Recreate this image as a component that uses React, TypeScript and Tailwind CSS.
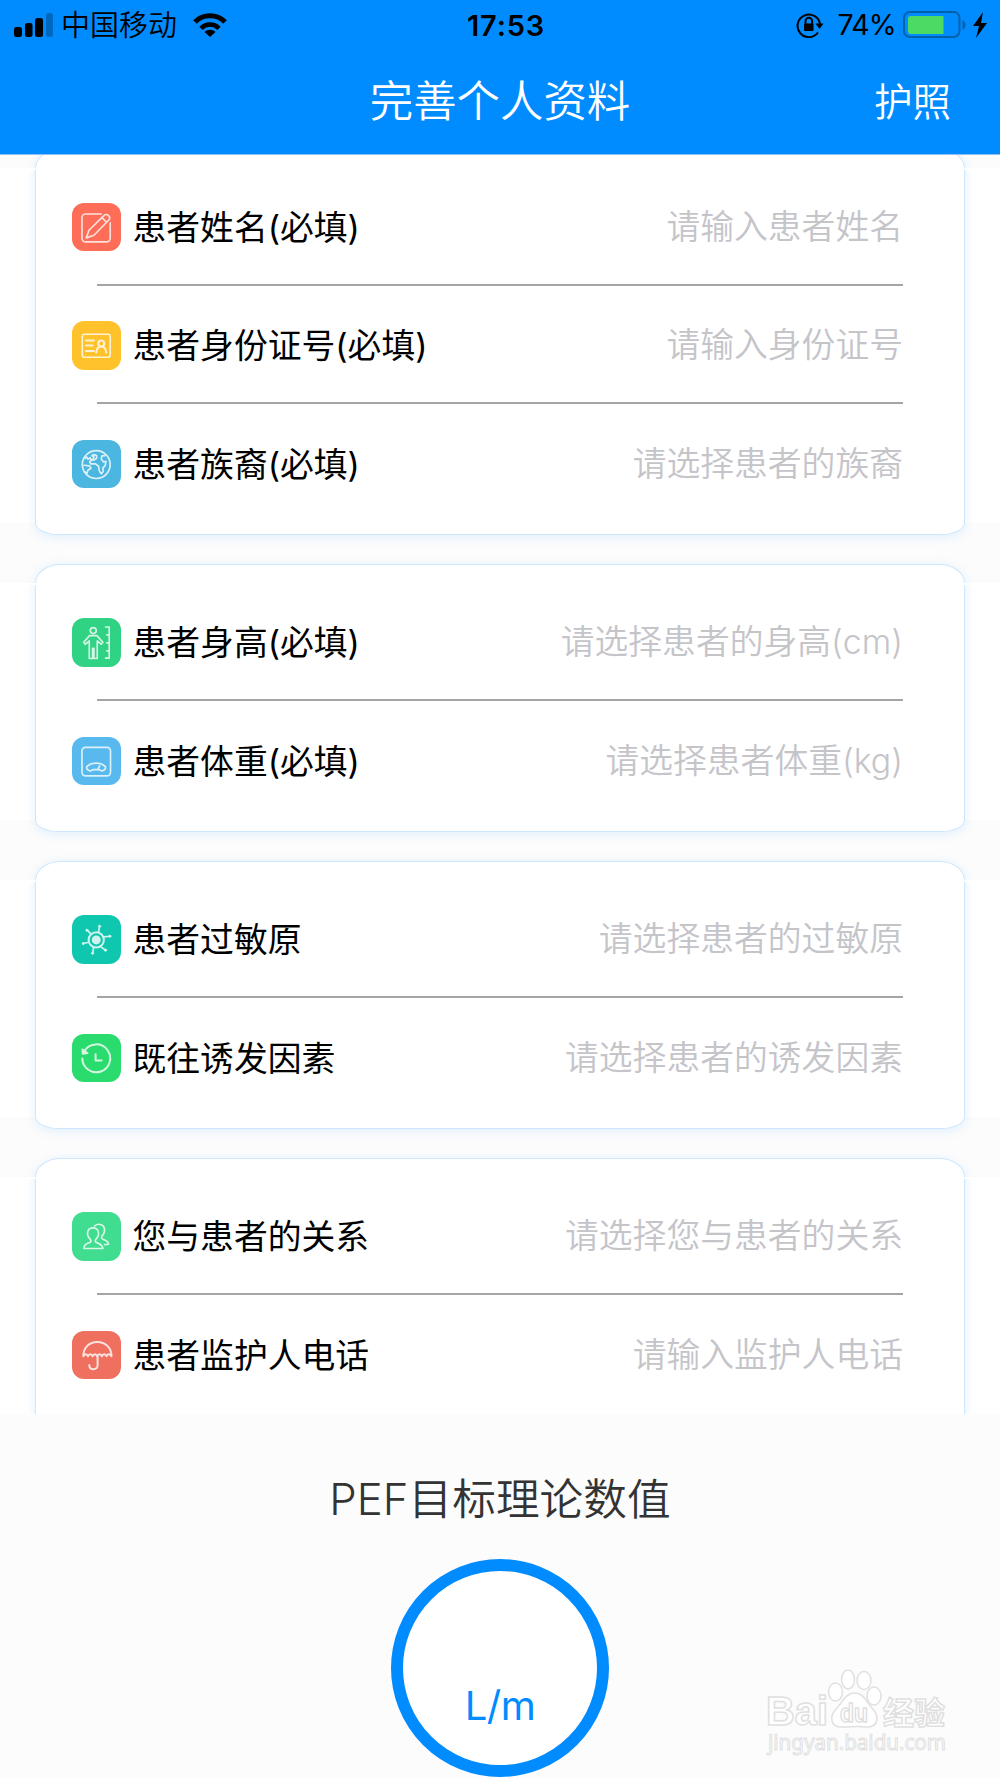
import type { ReactNode } from "react";

type Row = {
  label: string;
  placeholder: string;
  color: string;
  icon: ReactNode;
};

const EditIcon = (
  <>
    <path d="M88 33H41a11 11 0 0 0-11 11v62a11 11 0 0 0 11 11h63a11 11 0 0 0 11-11V60" />
    <path d="M43 105l8-23 45-44a9 9 0 0 1 14 14L66 97zM90 44l14 14" />
  </>
);

const IdIcon = (
  <>
    <rect x="31" y="40" width="84" height="69" rx="7" />
    <path d="M42 59h24M42 74h20M42 90h24" strokeWidth="6" />
    <circle cx="88" cy="68" r="9" strokeWidth="6" />
    <path d="M73 95c1-11 7-18 15-18s14 7 15 18" strokeWidth="6" />
  </>
);

const GlobeIcon = (
  <>
    <circle cx="73" cy="74" r="42" />
    <path d="M39 55l5-4 4 7 7-5 2 8 6-3 3-7-6-4 6-3 8 3v8l-7 5-8 1-6 5 4 6h14l9 7 2 13 6 10 6-7-1-11 7-7 2-13-7 2-7-9 2-9 9-1" />
    <path d="M36 76l17 2 4 7-9 6-3 9-7-5" />
  </>
);

const HeightIcon = (
  <>
    <circle cx="64" cy="38" r="9" />
    <path d="M53 53h22l18 20-5 6-12-10v53H66V91h-4v31H52V69L40 79l-5-6z" />
    <path d="M101 27h11v94h-11M105 51h7M105 75h7M105 99h7" />
  </>
);

const ScaleIcon = (
  <>
    <rect x="30" y="31" width="86" height="86" rx="11" />
    <path d="M44 90c14-15 43-15 57 0 1 5-4 10-10 12-4 1-6-4-12-4h-14c-6 0-6 6-11 4-6-2-11-7-10-12zM78 98l5-11" />
  </>
);

const AllergenIcon = (
  <>
    <circle cx="73" cy="75" r="23" strokeWidth="6" />
    <circle cx="73" cy="75" r="11" fill="white" />
    <path d="M80 51l3-18M95 66l20-2M87 96l14 10M65 98l-3 18M50 82l-16 4M56 56L45 45" />
    <g fill="white" strokeWidth="2">
      <circle cx="83" cy="34" r="3.500" />
      <circle cx="114" cy="64" r="3.500" />
      <circle cx="101" cy="106" r="3.500" />
      <circle cx="62" cy="115" r="3.500" />
      <circle cx="34" cy="86" r="3.500" />
      <circle cx="45" cy="46" r="3.500" />
    </g>
  </>
);

const HistoryIcon = (
  <>
    <path d="M31 74a42 42 0 1 0 7-24" strokeWidth="6" />
    <path d="M31 46l1 14 15-2z" fill="white" />
    <path d="M71 61v19h18" strokeWidth="6" />
  </>
);

const PeopleIcon = (
  <>
    <path d="M36 110c-1-12 8-14 19-19 3-2 2-6 0-9-14-14-9-34 8-34s23 20 9 34c-2 3-3 7 0 9 11 5 20 7 21 19z" />
    <path d="M68 42c12-10 31-4 30 14 0 8-3 12-8 17-2 4-1 7 3 9 9 4 17 6 17 15l-12 1" />
  </>
);

const UmbrellaIcon = (
  <>
    <path d="M34 76c0-26 18-43 42-43s43 17 43 43c-5-8-12-8-15 0-4-8-10-8-14 0-4-8-10-8-14 0-4-8-10-8-14 0-4-8-10-8-14 0-3-8-9-8-14 0z" strokeWidth="6" />
    <path d="M77 76v28c0 15-25 15-25-2" strokeWidth="6" />
  </>
);

const groups: Row[][] = [
  [
    { label: "患者姓名(必填)", placeholder: "请输入患者姓名", color: "bg-[#fd6d57]", icon: EditIcon },
    { label: "患者身份证号(必填)", placeholder: "请输入身份证号", color: "bg-[#ffc22a]", icon: IdIcon },
    { label: "患者族裔(必填)", placeholder: "请选择患者的族裔", color: "bg-[#4bb7e0]", icon: GlobeIcon },
  ],
  [
    { label: "患者身高(必填)", placeholder: "请选择患者的身高(cm)", color: "bg-[#30d284]", icon: HeightIcon },
    { label: "患者体重(必填)", placeholder: "请选择患者体重(kg)", color: "bg-[#57b9ee]", icon: ScaleIcon },
  ],
  [
    { label: "患者过敏原", placeholder: "请选择患者的过敏原", color: "bg-[#0fc7ae]", icon: AllergenIcon },
    { label: "既往诱发因素", placeholder: "请选择患者的诱发因素", color: "bg-[#2adb6e]", icon: HistoryIcon },
  ],
  [
    { label: "您与患者的关系", placeholder: "请选择您与患者的关系", color: "bg-[#40dc90]", icon: PeopleIcon },
    { label: "患者监护人电话", placeholder: "请输入监护人电话", color: "bg-[#ef705f]", icon: UmbrellaIcon },
  ],
];

function StatusBar() {
  return (
    <div className="flex h-[50px] items-center justify-between pr-[12px] pl-[14px] text-black">
      <div className="flex flex-1 items-center">
        <svg width="39" height="24" viewBox="0 0 39 24">
          <rect y="14" width="8" height="10" rx="2.5" />
          <rect x="11" y="10" width="7.5" height="14" rx="2.5" />
          <rect x="21" y="5" width="8" height="19" rx="2.5" />
          <rect x="32" width="7" height="24" rx="2.5" opacity=".25" />
        </svg>
        <span className="ml-[8px] text-[29px] leading-none font-[350]">中国移动</span>
        <svg className="ml-[16px]" width="34" height="24" viewBox="0 0 34 24">
          <g fill="none" stroke="black" strokeWidth="5">
            <path d="M2 9C10 .7 24 .7 32 9" />
            <path d="M8 15.3c5-5 13-5 18 0" strokeWidth="4.6" />
          </g>
          <path d="M11.5 19c3-3 8-3 11 0L17 24z" />
        </svg>
      </div>
      <span className="translate-x-[5px] text-[29px] leading-none font-semibold tracking-[.8px]">17:53</span>
      <div className="flex flex-1 items-center justify-end">
        <svg width="28" height="26" viewBox="0 0 28 26">
          <g fill="none" stroke="black" strokeWidth="2">
            <path d="M22 20.5A11.3 11.3 0 1 1 24 12" />
            <path d="M9.5 12V9a3.3 3.3 0 0 1 6.6 0v3" />
          </g>
          <rect x="8" y="11.500" width="9.500" height="7.500" rx="1" />
          <path d="M19.500 11.500h8L23.500 17z" />
        </svg>
        <span className="ml-[14px] text-[28.500px] leading-none tracking-[-.8px]">74%</span>
        <svg className="ml-[7px]" width="63" height="28" viewBox="0 0 63 28">
          <rect x="1" y="1" width="55.500" height="25" rx="6" fill="none" stroke="#0061ad" strokeWidth="2" />
          <path d="M5 8a3 3 0 0 1 3-3h32.500v18H8a3 3 0 0 1-3-3z" fill="#4cd964" />
          <path d="M59.500 9c4 2 4 8 0 10z" fill="#0061ad" />
        </svg>
        <svg className="ml-[6px]" width="16" height="26" viewBox="0 0 16 26">
          <path d="M11 0L1 14h6L4 26 15 11H9z" />
        </svg>
      </div>
    </div>
  );
}

function FormRow({ row, last }: { row: Row; last: boolean }) {
  return (
    <div className="flex h-[118.500px] flex-col">
      <div className="flex flex-1 items-center">
        <div className={`flex h-[48.500px] w-[48.500px] rounded-[12px] ${row.color}`}>
          <svg
            viewBox="0 0 146 146"
            className="h-full w-full opacity-80"
            fill="none"
            stroke="white"
            strokeWidth="5"
            strokeLinecap="round"
            strokeLinejoin="round"
          >
            {row.icon}
          </svg>
        </div>
        <span className="ml-[12px] pt-[2px] text-[33.800px] leading-none text-black">{row.label}</span>
        <span className="mr-[1px] ml-auto text-[33.800px] leading-none font-[350] text-[#c4c4c9]">
          {row.placeholder}
        </span>
      </div>
      {!last && <div className="-mt-[2.500px] mr-[1px] mb-[.5px] ml-[24.500px] h-[2px] bg-[#a5a5a5]" />}
    </div>
  );
}

function Group({ rows }: { rows: Row[] }) {
  return (
    <section className="relative bg-white pr-[96px] pl-[72px]">
      <div className="absolute -top-[19px] right-[35px] -bottom-[12px] left-[35px] rounded-[26px_26px_24px_24px/19px_19px_12px_12px] border border-[#cde7ff] bg-white shadow-[0_2px_12px_rgba(0,140,255,0.12)]" />
      {/* seam between the rounded cap and the card body */}
      <div className="absolute top-0 right-0 left-0 flex h-[2px] justify-between">
        <div className="w-[48px] bg-white" />
        <div className="w-[48px] bg-white" />
      </div>
      <div className="relative">
        {rows.map((row, i) => (
          <FormRow key={row.label} row={row} last={i === rows.length - 1} />
        ))}
      </div>
    </section>
  );
}

function Watermark() {
  return (
    <svg className="absolute right-[40px] bottom-[19px]" width="200" height="104" viewBox="0 0 200 104">
      <g fill="white" stroke="#e0e0e0" strokeWidth="1.500">
        <text x="6" y="70" fontFamily="Liberation Sans" fontWeight="700" fontSize="40" textLength="62" lengthAdjust="spacingAndGlyphs">Bai</text>
        <ellipse cx="75.500" cy="37" rx="7" ry="9" />
        <ellipse cx="88" cy="24.500" rx="6.500" ry="9.500" />
        <ellipse cx="104" cy="25.500" rx="7" ry="9" />
        <ellipse cx="114" cy="41" rx="7" ry="9" />
        <path d="M95 38c-10 0-12 9-18 15-9 9-6 20 6 19 7 0 17-1 22 0 12 1 16-9 7-19-6-6-8-15-17-15z" />
        <text x="80" y="67" fontFamily="Liberation Sans" fontWeight="700" fontSize="25" textLength="28" lengthAdjust="spacingAndGlyphs">du</text>
        <text x="123" y="69" fontFamily="Noto Sans CJK SC" fontWeight="700" fontSize="31">经验</text>
        <text x="8" y="95" fontFamily="Noto Sans" fontSize="21" strokeWidth="1" textLength="178" lengthAdjust="spacingAndGlyphs">jingyan.baidu.com</text>
      </g>
    </svg>
  );
}

export default function App() {
  return (
    <div className="relative h-[1778px] w-[1000px] overflow-hidden bg-[#fcfcfc] font-['Inter','Noto_Sans_CJK_SC',sans-serif] font-normal">
      <header className="relative z-10 h-[155px] border-b border-[#8fc0ec] bg-[#008cff]">
        <StatusBar />
        <div className="grid grid-cols-3 items-center pt-[30px] pr-[49px] leading-none text-white">
          <span />
          <h1 className="-mr-[49px] text-center text-[43.400px] font-[350] whitespace-nowrap">完善个人资料</h1>
          <span className="pt-[1px] text-right text-[38.500px] font-[350]">护照</span>
        </div>
      </header>

      <main className="flex h-[1258.500px] flex-col gap-[60px] overflow-hidden pt-[12.500px]">
        {groups.map((rows) => (
          <Group key={rows[0].label} rows={rows} />
        ))}
      </main>

      <footer className="flex flex-col items-center">
        <h2 className="mt-[64px] h-[43px] text-[43.700px] leading-none font-[350] text-[#333]">PEF目标理论数值</h2>
        <div className="mt-[38.500px] flex h-[218px] w-[218px] items-end justify-center rounded-full border-[12px] border-[#008cff] bg-white pb-[39px]">
          <span className="text-[40px] leading-none tracking-[-.5px] text-[#008cff]">L/m</span>
        </div>
      </footer>

      <Watermark />
    </div>
  );
}
